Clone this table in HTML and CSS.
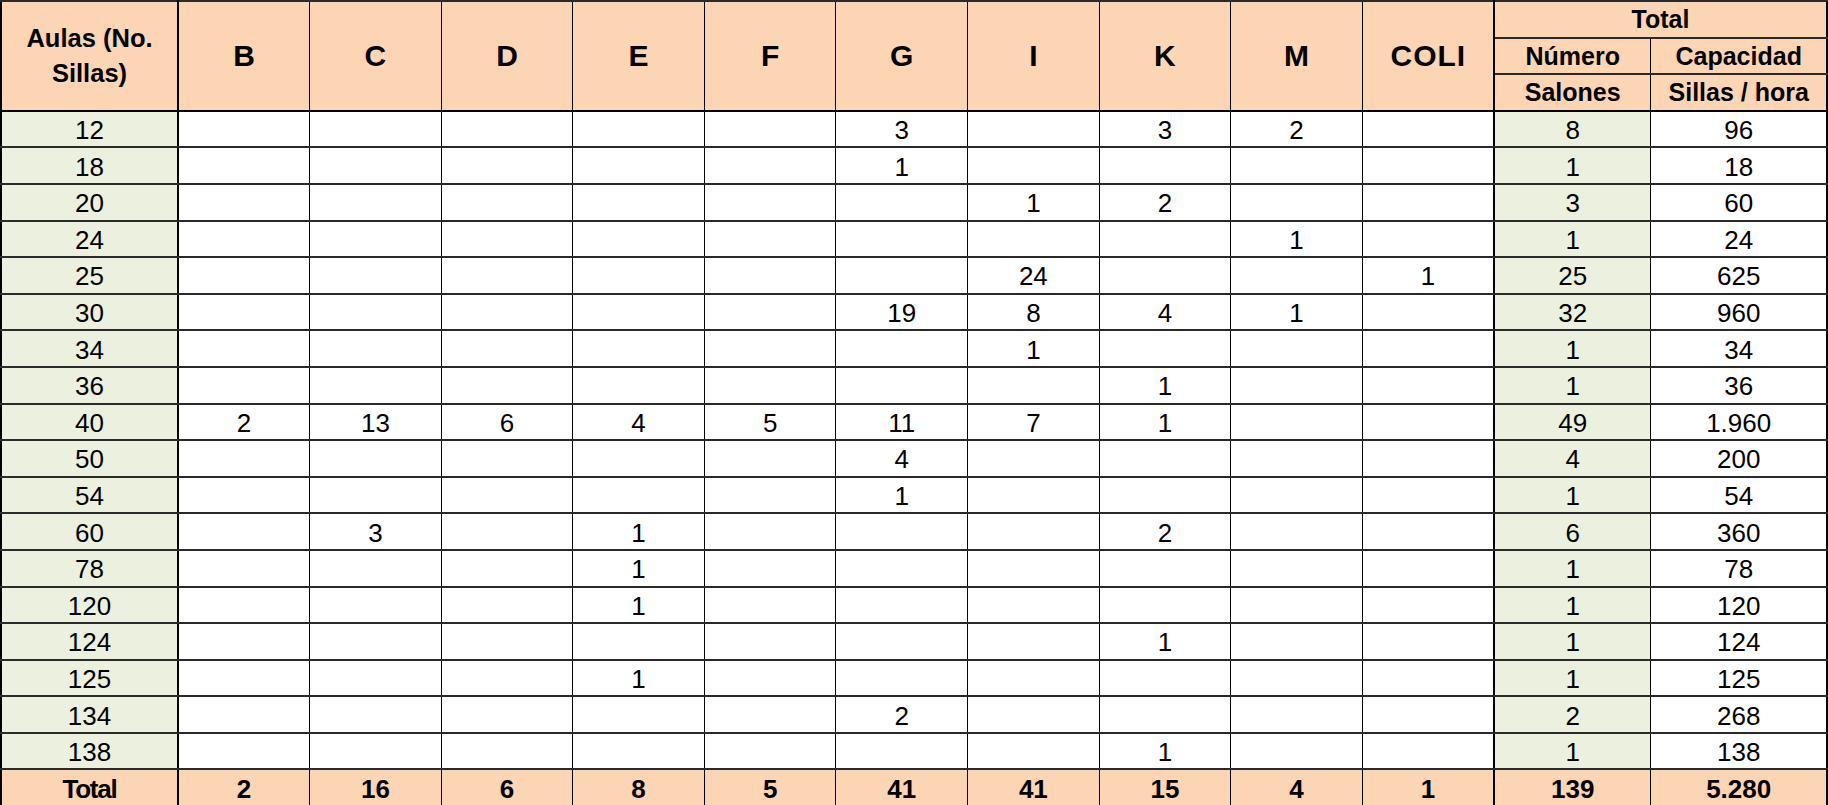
FILE: index.html
```html
<!DOCTYPE html>
<html lang="es">
<head>
<meta charset="utf-8">
<title>Aulas por bloque</title>
<link rel="stylesheet" href="styles.css">
</head>
<body>
<table class="grid">
  <colgroup>
    <col class="c-first">
    <col class="c-blk"><col class="c-blk"><col class="c-blk"><col class="c-blk"><col class="c-blk">
    <col class="c-blk"><col class="c-blk"><col class="c-blk"><col class="c-blk"><col class="c-blk">
    <col class="c-num">
    <col class="c-cap">
  </colgroup>
  <thead>
    <tr>
      <th rowspan="3" class="h-aulas">Aulas (No.<br>Sillas)</th>
      <th rowspan="3" class="h-blk">B</th>
      <th rowspan="3" class="h-blk">C</th>
      <th rowspan="3" class="h-blk">D</th>
      <th rowspan="3" class="h-blk">E</th>
      <th rowspan="3" class="h-blk">F</th>
      <th rowspan="3" class="h-blk">G</th>
      <th rowspan="3" class="h-blk">I</th>
      <th rowspan="3" class="h-blk">K</th>
      <th rowspan="3" class="h-blk">M</th>
      <th rowspan="3" class="h-blk sep">COLI</th>
      <th colspan="2" class="h-total">Total</th>
    </tr>
    <tr>
      <th class="h-sub">Número</th>
      <th class="h-sub">Capacidad</th>
    </tr>
    <tr class="h-last">
      <th class="h-sub">Salones</th>
      <th class="h-sub">Sillas / hora</th>
    </tr>
  </thead>
  <tbody>
    <tr><td class="k">12</td><td></td><td></td><td></td><td></td><td></td><td>3</td><td></td><td>3</td><td>2</td><td class="sep"></td><td class="n">8</td><td>96</td></tr>
    <tr><td class="k">18</td><td></td><td></td><td></td><td></td><td></td><td>1</td><td></td><td></td><td></td><td class="sep"></td><td class="n">1</td><td>18</td></tr>
    <tr><td class="k">20</td><td></td><td></td><td></td><td></td><td></td><td></td><td>1</td><td>2</td><td></td><td class="sep"></td><td class="n">3</td><td>60</td></tr>
    <tr><td class="k">24</td><td></td><td></td><td></td><td></td><td></td><td></td><td></td><td></td><td>1</td><td class="sep"></td><td class="n">1</td><td>24</td></tr>
    <tr><td class="k">25</td><td></td><td></td><td></td><td></td><td></td><td></td><td>24</td><td></td><td></td><td class="sep">1</td><td class="n">25</td><td>625</td></tr>
    <tr><td class="k">30</td><td></td><td></td><td></td><td></td><td></td><td>19</td><td>8</td><td>4</td><td>1</td><td class="sep"></td><td class="n">32</td><td>960</td></tr>
    <tr><td class="k">34</td><td></td><td></td><td></td><td></td><td></td><td></td><td>1</td><td></td><td></td><td class="sep"></td><td class="n">1</td><td>34</td></tr>
    <tr><td class="k">36</td><td></td><td></td><td></td><td></td><td></td><td></td><td></td><td>1</td><td></td><td class="sep"></td><td class="n">1</td><td>36</td></tr>
    <tr><td class="k">40</td><td>2</td><td>13</td><td>6</td><td>4</td><td>5</td><td>11</td><td>7</td><td>1</td><td></td><td class="sep"></td><td class="n">49</td><td>1.960</td></tr>
    <tr><td class="k">50</td><td></td><td></td><td></td><td></td><td></td><td>4</td><td></td><td></td><td></td><td class="sep"></td><td class="n">4</td><td>200</td></tr>
    <tr><td class="k">54</td><td></td><td></td><td></td><td></td><td></td><td>1</td><td></td><td></td><td></td><td class="sep"></td><td class="n">1</td><td>54</td></tr>
    <tr><td class="k">60</td><td></td><td>3</td><td></td><td>1</td><td></td><td></td><td></td><td>2</td><td></td><td class="sep"></td><td class="n">6</td><td>360</td></tr>
    <tr><td class="k">78</td><td></td><td></td><td></td><td>1</td><td></td><td></td><td></td><td></td><td></td><td class="sep"></td><td class="n">1</td><td>78</td></tr>
    <tr><td class="k">120</td><td></td><td></td><td></td><td>1</td><td></td><td></td><td></td><td></td><td></td><td class="sep"></td><td class="n">1</td><td>120</td></tr>
    <tr><td class="k">124</td><td></td><td></td><td></td><td></td><td></td><td></td><td></td><td>1</td><td></td><td class="sep"></td><td class="n">1</td><td>124</td></tr>
    <tr><td class="k">125</td><td></td><td></td><td></td><td>1</td><td></td><td></td><td></td><td></td><td></td><td class="sep"></td><td class="n">1</td><td>125</td></tr>
    <tr><td class="k">134</td><td></td><td></td><td></td><td></td><td></td><td>2</td><td></td><td></td><td></td><td class="sep"></td><td class="n">2</td><td>268</td></tr>
    <tr><td class="k">138</td><td></td><td></td><td></td><td></td><td></td><td></td><td></td><td>1</td><td></td><td class="sep"></td><td class="n">1</td><td>138</td></tr>
  </tbody>
  <tfoot>
    <tr>
      <td class="t-label">Total</td>
      <td>2</td><td>16</td><td>6</td><td>8</td><td>5</td><td>41</td><td>41</td><td>15</td><td>4</td><td class="sep">1</td><td>139</td><td>5.280</td>
    </tr>
  </tfoot>
</table>
</body>
</html>
```

FILE: styles.css
```css
html, body {
  margin: 0;
  padding: 0;
  background: #ffffff;
}

.grid {
  border-collapse: collapse;
  table-layout: fixed;
  width: 1826px;
  font-family: "Liberation Sans", Arial, sans-serif;
  color: #000;
  border: 2px solid #000;
}

.c-first { width: 177px; }
.c-blk { width: 131.6px; }
.c-num { width: 157px; }
.c-cap { width: 176px; }

.grid th,
.grid td {
  border-left: 1px solid #000;
  border-right: 1px solid #000;
  border-top: 2px solid #2a2a2a;
  border-bottom: 2px solid #2a2a2a;
  padding: 0;
  text-align: center;
  vertical-align: middle;
  white-space: nowrap;
  overflow: hidden;
}

.grid tr {
  height: 36.6px;
}

.grid th {
  background: #fcd5b4;
  font-weight: bold;
}

.grid .sep {
  border-right: 2px solid #000;
}

.h-aulas {
  font-size: 25.5px;
  line-height: 35px;
}

.grid .h-aulas,
.grid td.k,
.grid td.t-label {
  border-right: 2px solid #000;
}

.h-blk {
  font-size: 30px;
  letter-spacing: 1px;
  text-indent: 1px;
  padding-top: 2px;
}

.h-total {
  font-size: 25px;
  line-height: 30px;
}

.h-sub {
  font-size: 25px;
  line-height: 30px;
  padding-top: 3px;
}

.grid thead tr:last-child th,
.grid thead th[rowspan] {
  border-bottom: 2px solid #000;
}

.grid tbody td {
  font-size: 26px;
  line-height: 30px;
  padding-top: 2px;
}

.grid td.k {
  background: #ebf1de;
}

.grid td.n {
  background: #ebf1de;
}

.grid tfoot td {
  background: #fcd5b4;
  font-weight: bold;
  font-size: 26px;
  line-height: 30px;
  padding-top: 2px;
  border-top: 2px solid #000;
}

.grid tfoot td.t-label {
  letter-spacing: -1.2px;
}
```
